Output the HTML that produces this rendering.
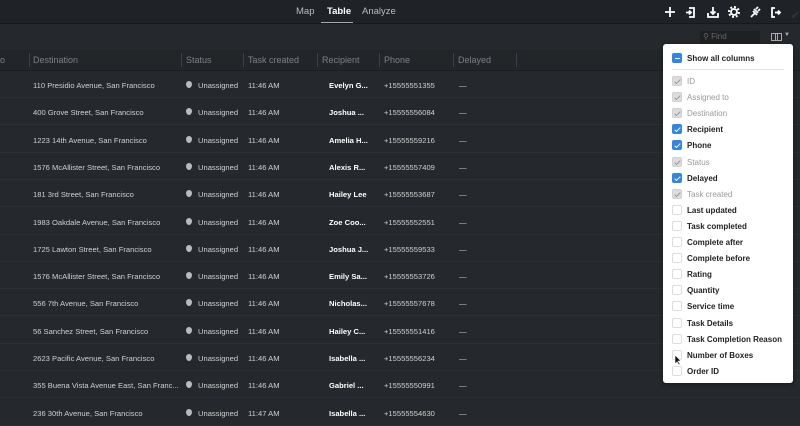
<!DOCTYPE html>
<html><head><style>
*{margin:0;padding:0;box-sizing:border-box}
body{width:800px;height:424px;overflow:hidden;background:#25282c;font-family:"Liberation Sans",sans-serif;position:relative;color:#d8d8d8}
.top{position:absolute;left:0;top:0;width:800px;height:24px;background:#1f2226;border-bottom:1px solid #17191c}
.nav{position:absolute;top:6px;font-size:9.5px;color:#bbb}
.abs{position:absolute}
.hdr{position:absolute;top:50px;left:0;width:800px;height:21px;background:#232629;border-bottom:1px solid #1c1e21}
.hdr span{position:absolute;top:5px;font-size:9px;color:#7c8086}
.hdr i{position:absolute;top:3px;width:1px;height:14px;background:#3c4046}
.row{position:absolute;left:0;width:800px;height:27px;border-bottom:1px solid #2c2f34;font-size:7.6px;color:#d0d0d0}
.row span{position:absolute;top:10px;white-space:nowrap}
.pin{position:absolute;top:10px;left:186px;width:6px;height:7px;background:#bbb;border-radius:3px 3px 3px 3px/3px 3px 4px 4px}
.dd{position:absolute;left:663px;top:44px;width:130px;height:339px;background:#fff;border-radius:3px;box-shadow:0 1px 4px rgba(0,0,0,.4)}
.it{position:absolute;left:0;font-size:8px;color:#222;font-weight:bold;height:12px;width:130px}
.it b{position:absolute;left:9px;top:0;width:10px;height:10px;border:1px solid #ddd;border-radius:2px;background:#fff}
.it b.on{background:#2f86e8;border-color:#2f86e8}
.it b.dis{background:#ddd;border-color:#d0d0d0}
.it b.on::after,.it b.dis::after{content:"";position:absolute;left:3px;top:1px;width:2px;height:5px;border:solid #fff;border-width:0 1.3px 1.3px 0;transform:rotate(45deg)}
.it b.dis::after{border-color:#999}
.it span{position:absolute;left:24px;top:1px}
.it.g{color:#999;font-weight:normal}
</style></head><body>
<div class="top"></div>
<span class="nav" style="left:296px">Map</span>
<span class="nav" style="left:327px;color:#fff;font-weight:bold">Table</span>
<div class="abs" style="left:321px;top:22px;width:32px;height:1px;background:#aaa"></div>
<span class="nav" style="left:362px">Analyze</span>
<svg class="abs" style="left:664px;top:5px" width="136" height="16" viewBox="0 0 136 16" fill="none" stroke="#fff" stroke-width="1.8">
<path d="M6 2v10M1 7h10"/>
<path d="M25 3h5v9h-5M22 7.5h5M25 5.5l2 2-2 2"/>
<path d="M44 8v4h10V8M49 2v7M46.5 6.5l2.5 2.5 2.5-2.5"/>
<circle cx="70" cy="7" r="3"/><circle cx="70" cy="7" r="5" stroke-dasharray="2 1.9" stroke-width="2"/>
<path d="M87 12l4-4M90 4l4 4M92 4l2-2M94 6l2-2M89 6l4 4"/>
<path d="M111 3h-3v9h3M111 7.5h5M114 5.5l2 2-2 2"/>
<path d="M129 12l5-5M131 12h-2v-2" stroke="#333"/>
</svg>
<div class="abs" style="left:700px;top:31px;width:60px;height:13px;background:#1e2124;border-radius:2px"></div>
<span class="abs" style="left:703px;top:32px;font-size:8px;color:#666">⚲ Find</span>
<div class="abs" style="left:771px;top:33px;width:11px;height:8px;border:1px solid #aaa"></div>
<div class="abs" style="left:775px;top:33px;width:3px;height:8px;border-left:1px solid #aaa;border-right:1px solid #aaa"></div>
<span class="abs" style="left:784px;top:32px;font-size:6px;color:#aaa">▼</span>
<div class="hdr">
<span style="left:0">o</span><i style="left:29px"></i><span style="left:33px">Destination</span>
<i style="left:181px"></i><span style="left:186px">Status</span>
<i style="left:243px"></i><span style="left:248px">Task created</span>
<i style="left:317px"></i><span style="left:322px">Recipient</span>
<i style="left:379px"></i><span style="left:384px">Phone</span>
<i style="left:453px"></i><span style="left:458px">Delayed</span>
<i style="left:516px"></i>
</div>
<div id="rows"></div>
<script>
var d=[["110 Presidio Avenue, San Francisco","Evelyn G...","+15555551355","11:46"],["400 Grove Street, San Francisco","Joshua ...","+15555556084","11:46"],["1223 14th Avenue, San Francisco","Amelia H...","+15555559216","11:46"],["1576 McAllister Street, San Francisco","Alexis R...","+15555557409","11:46"],["181 3rd Street, San Francisco","Hailey Lee","+15555553687","11:46"],["1983 Oakdale Avenue, San Francisco","Zoe Coo...","+15555552551","11:46"],["1725 Lawton Street, San Francisco","Joshua J...","+15555559533","11:46"],["1576 McAllister Street, San Francisco","Emily Sa...","+15555553726","11:46"],["556 7th Avenue, San Francisco","Nicholas...","+15555557678","11:46"],["56 Sanchez Street, San Francisco","Hailey C...","+15555551416","11:46"],["2623 Pacific Avenue, San Francisco","Isabella ...","+15555556234","11:46"],["355 Buena Vista Avenue East, San Franc...","Gabriel ...","+15555550991","11:46"],["236 30th Avenue, San Francisco","Isabella ...","+15555554630","11:47"]];
var h="";d.forEach(function(r,i){h+='<div class="row" style="top:'+(71+i*27.3)+'px"><span style="left:33px">'+r[0]+'</span><div class="pin"></div><span style="left:198px">Unassigned</span><span style="left:248px">'+r[3]+' AM</span><span style="left:329px;font-weight:bold;color:#fff">'+r[1]+'</span><span style="left:384px">'+r[2]+'</span><span style="left:459px">—</span></div>'});
document.getElementById("rows").innerHTML=h;
</script>
<div class="dd">
<div class="it" style="top:9px"><b class="on" style="border-color:#2f86e8"></b><span>Show all columns</span></div>
<div class="abs" style="left:9px;top:25px;width:112px;height:1px;background:#e3e3e3"></div>
<div id="items"></div>
</div>
<script>
var it=[["ID","d"],["Assigned to","d"],["Destination","d"],["Recipient","o"],["Phone","o"],["Status","d"],["Delayed","o"],["Task created","d"],["Last updated",""],["Task completed",""],["Complete after",""],["Complete before",""],["Rating",""],["Quantity",""],["Service time",""],["Task Details",""],["Task Completion Reason",""],["Number of Boxes",""],["Order ID",""]];
var s="";it.forEach(function(x,i){s+='<div class="it'+(x[1]=="d"?" g":"")+'" style="top:'+(32+i*16.1)+'px"><b class="'+(x[1]=="d"?"dis":x[1]=="o"?"on":"")+'"></b><span>'+x[0]+'</span></div>'});
document.getElementById("items").innerHTML=s;
</script>
<style>.dd>.it:first-child b::after{content:"";left:2px;top:4px;width:5px;height:0;border:0;border-top:1.3px solid #fff;transform:none}</style>
<svg class="abs" style="left:674px;top:354px" width="8" height="12"><path d="M1 1v9l2-2 2 3 1-1-2-3h3z" fill="#111" stroke="#fff" stroke-width=".6"/></svg>
</body></html>
